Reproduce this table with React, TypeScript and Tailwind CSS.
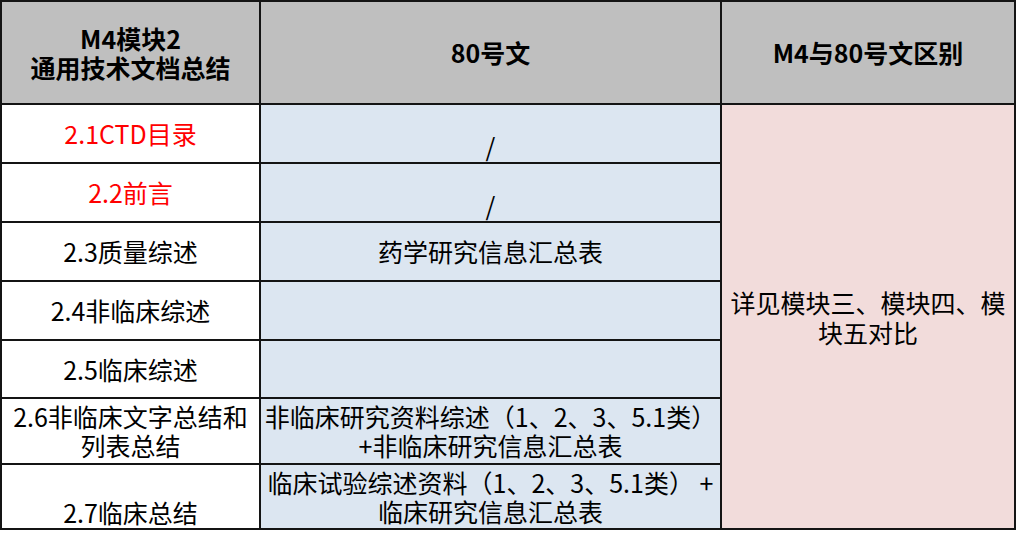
const font = { fontFamily: '"Noto Sans CJK SC", "Noto Sans", sans-serif' };

type Cell = {
  text: string[];
  red?: boolean;
  align?: 'center' | 'end';
};

const rows: { left: Cell; mid: Cell }[] = [
  { left: { text: ['2.1CTD目录'], red: true }, mid: { text: ['/'], align: 'end' } },
  { left: { text: ['2.2前言'], red: true }, mid: { text: ['/'], align: 'end' } },
  { left: { text: ['2.3质量综述'] }, mid: { text: ['药学研究信息汇总表'] } },
  { left: { text: ['2.4非临床综述'] }, mid: { text: [''] } },
  { left: { text: ['2.5临床综述'] }, mid: { text: [''] } },
  {
    left: { text: ['2.6非临床文字总结和', '列表总结'] },
    mid: { text: ['非临床研究资料综述（1、2、3、5.1类）', '+非临床研究信息汇总表'] },
  },
  {
    left: { text: ['2.7临床总结'], align: 'end' },
    mid: { text: ['临床试验综述资料（1、2、3、5.1类） +', '临床研究信息汇总表'] },
  },
];

function BodyCell({ cell, bg }: { cell: Cell; bg: string }) {
  return (
    <div
      className={`${bg} flex justify-center ${cell.align === 'end' ? 'items-end pb-[1px]' : 'items-center'} overflow-hidden`}
    >
      <div
        className={`text-center text-[25px] leading-[29px] whitespace-pre ${cell.red ? 'text-[#ff0000]' : 'text-black'}`}
      >
        {cell.text.map((t, i) => (
          <div key={i}>{t}</div>
        ))}
      </div>
    </div>
  );
}

export default function App() {
  return (
    <div className="w-[1017px] h-[546px] bg-white" style={font}>
      <div className="grid w-[1016px] grid-cols-[257px_459px_292px] grid-rows-[101px_57px_57px_57px_57px_56px_64px_63px] gap-[2px] p-[2px] bg-[#141414]">
        <div className="bg-[#bfbfbf] flex items-center justify-center text-center font-bold text-[25px] leading-[29px] text-black">
          <div>
            M4模块2
            <br />
            通用技术文档总结
          </div>
        </div>
        <div className="bg-[#bfbfbf] flex items-center justify-center font-bold text-[25px] text-black">
          80号文
        </div>
        <div className="bg-[#bfbfbf] flex items-center justify-center font-bold text-[25px] text-black">
          M4与80号文区别
        </div>

        {rows.map((r, i) => (
          <div key={i} className="contents">
            <div style={{ gridColumn: 1, gridRow: i + 2 }} className="grid">
              <BodyCell cell={r.left} bg="bg-white" />
            </div>
            <div style={{ gridColumn: 2, gridRow: i + 2 }} className="grid">
              <BodyCell cell={r.mid} bg="bg-[#dce6f1]" />
            </div>
          </div>
        ))}

        <div className="col-start-3 row-start-2 row-span-7 bg-[#f2dcdb] flex items-center justify-center px-[4px]">
          <div className="text-center text-[25px] leading-[30px] text-black">
            详见模块三、模块四、模块五对比
          </div>
        </div>
      </div>
    </div>
  );
}
